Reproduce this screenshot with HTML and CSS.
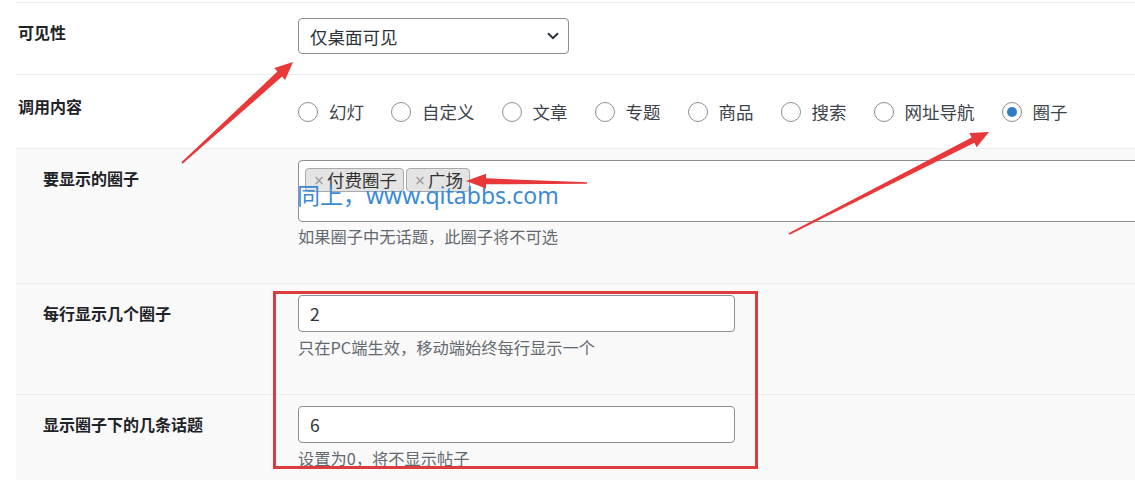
FILE: index.html
```html
<!DOCTYPE html>
<html lang="zh-CN">
<head>
<meta charset="utf-8">
<title>圈子设置</title>
<link rel="stylesheet" href="styles.css">
</head>
<body>
<div class="panel">
  <div class="field">
    <div class="field-label">可见性</div>
    <div class="field-control ctl-select">
      <div class="select">
        <span>仅桌面可见</span>
        <svg class="chev" width="12" height="8" viewBox="0 0 12 8"><path d="M1 1.2 L6 6.2 L11 1.2" fill="none" stroke="#2c3338" stroke-width="2"/></svg>
      </div>
    </div>
  </div>
  <div class="field">
    <div class="field-label label-radio">调用内容</div>
    <div class="field-control ctl-radio">
      <div class="radios">
        <label class="radio-item"><span class="radio"></span>幻灯</label>
        <label class="radio-item"><span class="radio"></span>自定义</label>
        <label class="radio-item"><span class="radio"></span>文章</label>
        <label class="radio-item"><span class="radio"></span>专题</label>
        <label class="radio-item"><span class="radio"></span>商品</label>
        <label class="radio-item"><span class="radio"></span>搜索</label>
        <label class="radio-item"><span class="radio"></span>网址导航</label>
        <label class="radio-item"><span class="radio checked"></span>圈子</label>
      </div>
    </div>
  </div>
  <div class="sub">
    <div class="field sub-field">
      <div class="field-label">要显示的圈子</div>
      <div class="field-control ctl-sub">
        <div class="multi">
          <span class="tag"><span class="tag-x">×</span>付费圈子</span>
          <span class="tag"><span class="tag-x">×</span>广场</span>
        </div>
        <div class="desc desc-multi">如果圈子中无话题，此圈子将不可选</div>
      </div>
    </div>
    <div class="field sub-field">
      <div class="field-label">每行显示几个圈子</div>
      <div class="field-control ctl-sub">
        <div class="input">2</div>
        <div class="desc">只在PC端生效，移动端始终每行显示一个</div>
      </div>
    </div>
    <div class="field sub-field">
      <div class="field-label">显示圈子下的几条话题</div>
      <div class="field-control ctl-sub">
        <div class="input">6</div>
        <div class="desc">设置为0，将不显示帖子</div>
      </div>
    </div>
  </div>
</div>

<div class="watermark">同上，www.qitabbs.com</div>

<svg class="annotations" width="1135" height="480" viewBox="0 0 1135 480">
  <polygon fill="#e8383a" points="181.4,162.3 277.4,71.6 274.3,68.1 293,62 285.1,80 282.1,76.6 182.6,163.7"/>
  <polygon fill="#e8383a" points="587,182.2 486,178.3 486,173.8 466,181 486,188.6 486,184.3 587,183.8"/>
  <polygon fill="#e8383a" points="788.5,233.2 971.6,137.4 969.4,133.1 989,132 976.6,147.3 974.4,142.8 789.5,234.8"/>
  <rect x="274.5" y="292.5" width="482" height="175" fill="none" stroke="#df3b3f" stroke-width="3"/>
</svg>
</body>
</html>
```

FILE: styles.css
```css
* { box-sizing: border-box; }

html { overflow: hidden; }

body {
  margin: 0;
  padding-top: 2px;
  width: 1135px;
  height: 480px;
  overflow: hidden;
  position: relative;
  background: #ffffff;
  font-family: "Noto Sans CJK SC", "Noto Sans", sans-serif;
  color: #2c3338;
}

.panel {
  margin-left: 16px;
  border-top: 1px solid #ececec;
  height: 478px;
  overflow: hidden;
}

.field {
  display: flex;
  align-items: flex-start;
  border-bottom: 1px solid #ececec;
}

.field-label {
  flex: none;
  width: 282px;
  padding-left: 2px;
  padding-top: 18px;
  font-size: 16px;
  line-height: 22px;
  font-weight: 700;
  color: #1d2327;
}

.label-radio { padding-top: 20px; }

.field-control { flex: 1; min-width: 0; }

.ctl-select { padding: 15px 0 20px; }
.ctl-radio { padding: 25px 0 24px; }

.select {
  width: 271px;
  height: 36px;
  border: 1px solid #8c8f94;
  border-radius: 4px;
  background: #fff;
  display: flex;
  align-items: center;
  justify-content: space-between;
  padding: 0 9px 0 11px;
  font-size: 17.5px;
  color: #2c3338;
}

.chev { display: block; }

.radios {
  display: flex;
  align-items: center;
  gap: 27px;
  height: 24px;
}

.radio-item {
  display: flex;
  align-items: center;
  font-size: 17.5px;
  line-height: 24px;
  color: #3c434a;
}

.radio {
  width: 20px;
  height: 20px;
  border: 1px solid #8c8f94;
  border-radius: 50%;
  background: #fff;
  margin-right: 11px;
  display: flex;
  align-items: center;
  justify-content: center;
}

.radio.checked::after {
  content: "";
  width: 10px;
  height: 10px;
  border-radius: 50%;
  background: #2f7cc4;
}

.sub { background: #f9f9f9; }

.sub-field .field-label { padding-left: 27px; }

.ctl-sub { padding: 11px 0 36px; }

.multi {
  width: 900px;
  height: 62px;
  border: 1px solid #8c8f94;
  border-radius: 4px;
  background: #fff;
  padding: 7px 6px;
  display: flex;
  align-items: flex-start;
  gap: 2px;
}

.tag {
  display: flex;
  align-items: center;
  height: 24px;
  border: 1px solid #aaaaaa;
  border-radius: 4px;
  background: #e4e4e4;
  padding: 0 6px 0 8px;
  font-size: 17.5px;
  line-height: 22px;
  color: #333;
}

.tag-x {
  font-family: "Noto Sans", sans-serif;
  color: #999;
  margin-right: 3px;
}

.input {
  width: 437px;
  height: 37px;
  border: 1px solid #8c8f94;
  border-radius: 4px;
  background: #fff;
  padding: 0 11px;
  display: flex;
  align-items: center;
  font-size: 17.5px;
  color: #2c3338;
}

.desc {
  margin-top: 4px;
  font-size: 16.25px;
  line-height: 22px;
  color: #646970;
}

.desc-multi { margin-top: 3px; }

.watermark {
  position: absolute;
  left: 297px;
  top: 184px;
  font-family: "Noto Sans", "Noto Sans CJK SC", sans-serif;
  font-size: 23px;
  line-height: 1;
  color: #3a8ad5;
  white-space: nowrap;
}

.annotations {
  position: absolute;
  left: 0;
  top: 0;
  pointer-events: none;
}
```
